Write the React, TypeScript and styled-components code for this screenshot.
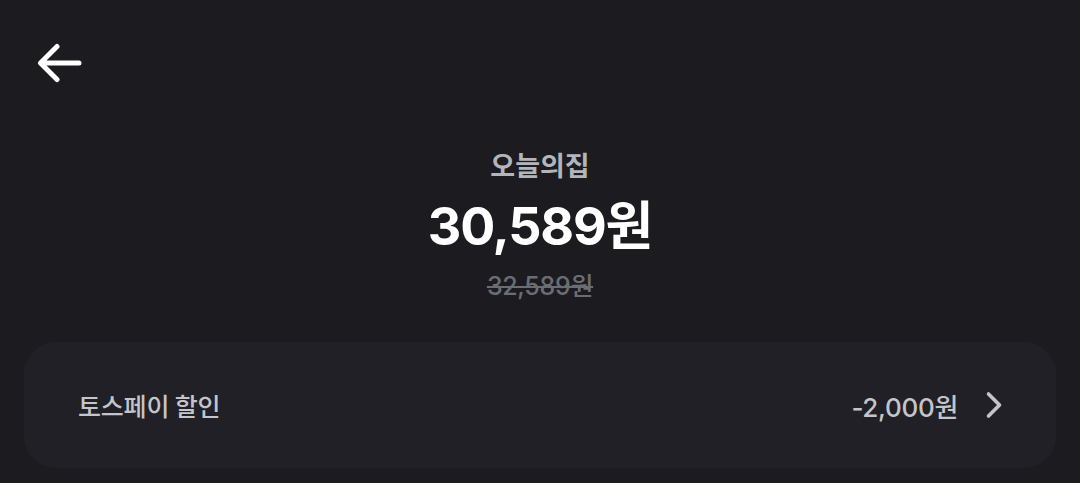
import React from "react";
import styled, { createGlobalStyle } from "styled-components";

const Global = createGlobalStyle`
  html, body { margin: 0; padding: 0; background: #1c1c20; }
  body { font-family: "Inter", "Noto Sans CJK KR", sans-serif; -webkit-font-smoothing: antialiased; }
`;

const Page = styled.div`
  width: 1080px;
  height: 483px;
  background: #1c1c20;
  box-sizing: border-box;
  padding: 0 24px;
  display: flex;
  flex-direction: column;
  overflow: hidden;
`;

const TopBar = styled.div`
  height: 126px;
  display: flex;
  align-items: center;
  padding-left: 12px;
  box-sizing: border-box;
`;

const BackButton = styled.button`
  width: 48px;
  height: 48px;
  border: none;
  background: transparent;
  padding: 0;
  display: flex;
  align-items: center;
  justify-content: center;
  color: #ffffff;
  cursor: pointer;
`;

const Summary = styled.div`
  margin-top: 22px;
  display: flex;
  flex-direction: column;
  align-items: center;
`;

const Merchant = styled.div`
  font-family: "Noto Sans CJK KR", sans-serif;
  font-size: 27px;
  font-weight: 700;
  color: #b3b5bc;
  letter-spacing: 0px;
  line-height: 34px;
`;

const Price = styled.div`
  font-family: "Inter", "Noto Sans CJK KR", sans-serif;
  font-size: 52px;
  font-weight: 700;
  color: #ffffff;
  letter-spacing: -1.2px;
  line-height: 64px;
  margin-top: 13px;
`;

const OldPrice = styled.div`
  font-family: "Inter", "Noto Sans CJK KR", sans-serif;
  font-size: 25px;
  font-weight: 500;
  color: #6b6d75;
  text-decoration: line-through;
  letter-spacing: -0.3px;
  line-height: 30px;
  margin-top: 12px;
`;

const Card = styled.div`
  margin-top: 41px;
  height: 126px;
  border-radius: 32px;
  background: #202026;
  display: flex;
  align-items: center;
  justify-content: space-between;
  padding: 0 50px 0 54px;
  box-sizing: border-box;
  flex-shrink: 0;
`;

const Label = styled.div`
  font-family: "Noto Sans CJK KR", sans-serif;
  font-size: 25px;
  font-weight: 500;
  color: #c3c5cb;
  letter-spacing: -0.2px;
`;

const Right = styled.div`
  display: flex;
  align-items: center;
  gap: 22px;
`;

const Amount = styled.div`
  font-family: "Inter", "Noto Sans CJK KR", sans-serif;
  font-size: 26px;
  font-weight: 500;
  color: #c3c5cb;
  letter-spacing: -0.3px;
`;

const Chevron = styled.svg`
  width: 26px;
  height: 28px;
  color: #c3c5cb;
`;

export default function App() {
  return (
    <>
      <Global />
      <Page>
        <TopBar>
          <BackButton aria-label="back">
            <svg width="46" height="40" viewBox="0 0 46 40" fill="none">
              <path d="M42 20H5M20 3.5L3.5 20L20 36.5" stroke="currentColor" strokeWidth="5" strokeLinecap="round" strokeLinejoin="round" />
            </svg>
          </BackButton>
        </TopBar>
        <Summary>
          <Merchant>오늘의집</Merchant>
          <Price>30,589원</Price>
          <OldPrice>32,589원</OldPrice>
        </Summary>
        <Card>
          <Label>토스페이 할인</Label>
          <Right>
            <Amount>-2,000원</Amount>
            <Chevron viewBox="0 0 26 28" fill="none">
              <path d="M8.5 3L19.5 14L8.5 25" stroke="currentColor" strokeWidth="3.6" strokeLinecap="round" strokeLinejoin="round" />
            </Chevron>
          </Right>
        </Card>
      </Page>
    </>
  );
}
